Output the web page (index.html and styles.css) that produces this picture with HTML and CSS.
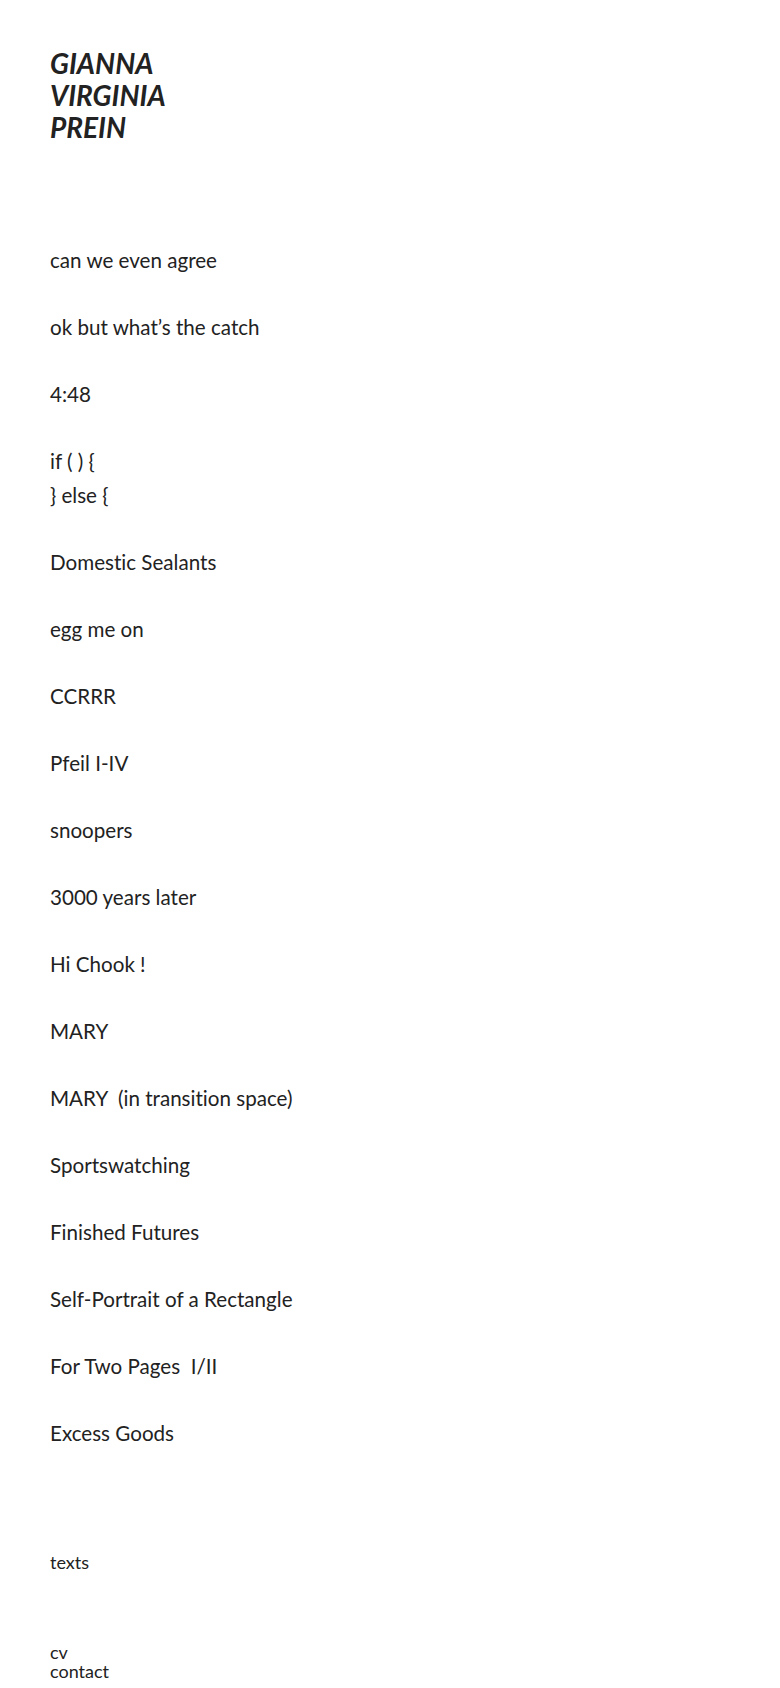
FILE: index.html
```html
<!DOCTYPE html>
<html>
<head>
<meta charset="utf-8">
<link rel="stylesheet" href="styles.css">
</head>
<body>
<div class="page">
  <h1 class="name">GIANNA<br>VIRGINIA<br>PREIN</h1>
  <ul class="works">
    <li>can we even agree</li>
    <li>ok but what’s the catch</li>
    <li>4:48</li>
    <li>if ( ) {<br>} else {</li>
    <li>Domestic Sealants</li>
    <li>egg me on</li>
    <li>CCRRR</li>
    <li>Pfeil I-IV</li>
    <li>snoopers</li>
    <li>3000 years later</li>
    <li>Hi Chook !</li>
    <li>MARY</li>
    <li>MARY&nbsp; (in transition space)</li>
    <li>Sportswatching</li>
    <li>Finished Futures</li>
    <li>Self-Portrait of a Rectangle</li>
    <li>For Two Pages&nbsp; I/II</li>
    <li>Excess Goods</li>
  </ul>
  <div class="footer">
    <div class="texts">texts</div>
    <div class="links">cv<br>contact</div>
  </div>
</div>
</body>
</html>
```
FILE: styles.css
```css
html, body {
  margin: 0;
  padding: 0;
  background: #fff;
}
.page {
  padding: 47px 50px 0;
  font-family: Lato, "Liberation Sans", sans-serif;
  color: #222;
  font-variant-ligatures: none;
}
.name {
  margin: 0;
  font-size: 28px;
  line-height: 32px;
  font-weight: 700;
  font-style: italic;
}
.works {
  list-style: none;
  margin: 100px 0 0;
  padding: 0;
  font-size: 20.6px;
  line-height: 34px;
}
.works li {
  margin-bottom: 33px;
}
.works li:last-child {
  margin-bottom: 0;
}
.footer {
  margin-top: 103px;
  font-size: 18px;
  line-height: 19.5px;
}
.links {
  margin-top: 70px;
}
```
